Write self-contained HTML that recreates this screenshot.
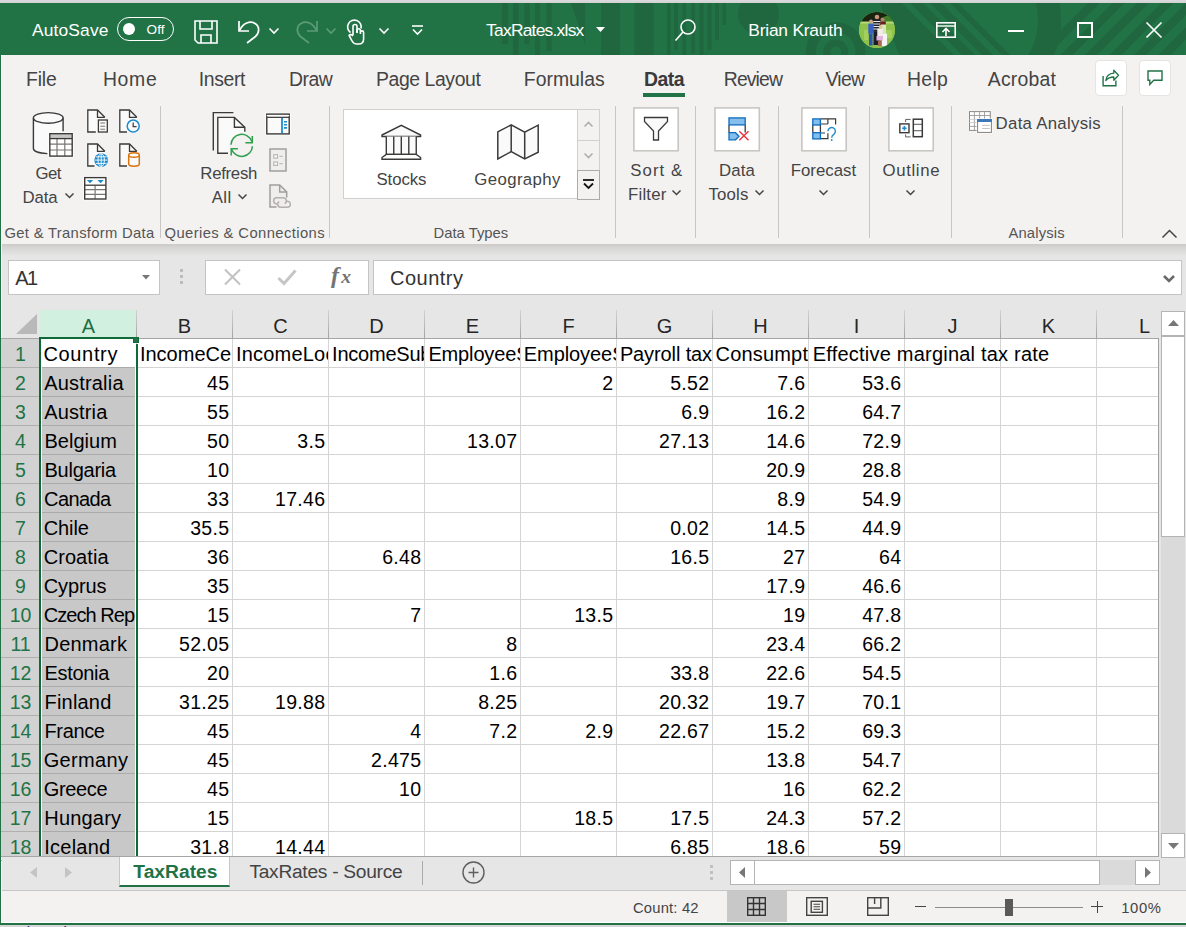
<!DOCTYPE html><html><head><meta charset="utf-8"><title>TaxRates.xlsx - Excel</title><style>
*{margin:0;padding:0;box-sizing:border-box}
html,body{width:1186px;height:927px;overflow:hidden;background:#f3f2f1}
body{font-family:"Liberation Sans",sans-serif;position:relative}
#app{position:absolute;left:0;top:0;width:1186px;height:927px;overflow:hidden;background:#f3f2f1}
.abs{position:absolute}
.t{position:absolute;white-space:nowrap}
svg{position:absolute;overflow:visible}
.sep{position:absolute;width:1px;background:#c8c6c4;top:106px;height:132px}
.cell{position:absolute;height:28px;line-height:30px;white-space:nowrap;overflow:hidden;color:#000}
.num{text-align:right;padding-right:2.700px;font-size:19.500px;letter-spacing:0.280px}
.txt{padding-left:2.500px;font-size:20px;letter-spacing:0.280px}
.rh{position:absolute;left:2px;width:37px;height:28px;text-align:center;font-size:19.500px;line-height:30px;color:#1e6e42}
.ch{position:absolute;top:310px;height:28px;width:95px;text-align:center;font-size:20px;line-height:32px;color:#262626}
</style></head><body><div id="app">
<div class="abs" style="left:0;top:0;width:1186px;height:3px;background:linear-gradient(#dcdcde,#d2d2d4)"></div>
<div class="abs" id="titlebar" style="left:0;top:3px;width:1186px;height:52px;background:#217346;overflow:hidden">
<svg width="1186" height="52" viewBox="0 3 1186 52" style="left:0;top:0"><g fill="#20673f"><rect x="502" y="3" width="6" height="41"/><rect x="513" y="3" width="5.500" height="52"/><rect x="524.500" y="3" width="5" height="41"/><rect x="535" y="3" width="5" height="52"/><rect x="546.500" y="3" width="5" height="48"/><path d="M571 3h14v42z"/><rect x="601" y="3" width="19" height="52"/><rect x="634.500" y="3" width="19" height="52"/><rect x="667" y="3" width="3.500" height="52"/><rect x="674" y="3" width="4" height="47"/><rect x="682.500" y="3" width="3.500" height="52"/><rect x="691.500" y="3" width="3.500" height="50"/><rect x="699.500" y="3" width="4" height="52"/><rect x="707.500" y="3" width="4" height="47"/><rect x="715" y="3" width="4" height="37"/><rect x="722.500" y="3" width="3.500" height="22"/><circle cx="758.500" cy="14" r="20.500"/></g><g fill="none" stroke="#20673f"><circle cx="835.700" cy="52" r="24.800" stroke-width="10"/><circle cx="835.700" cy="52" r="9" stroke-width="7"/><path d="M1042.050 -13.600A79.500 79.500 0 0 1 1035.100 65.600" stroke-width="23"/><path d="M880 3h22l52 52h-55zM910 3h13l52 52h-13zM930 3h11l52 52h-11zM950 3h8l52 52h-8z" fill="#20673f" stroke="none"/><path d="M1099 -2l-62 62M1123.500 -2l-62 62M1148 -2l-62 62M1172.500 -2l-62 62M1197 -2l-62 62M1221.500 -2l-62 62" stroke-width="8.500"/></g></svg>
</div>
<div class="t" style="left:32.10px;top:20px;font-size:17.4px;line-height:20px;color:#fff;letter-spacing:0.123px;">AutoSave</div>
<div class="abs" style="left:117px;top:17px;width:57px;height:24px;border:1px solid #fff;border-radius:12px"></div>
<div class="abs" style="left:123px;top:23px;width:12px;height:12px;border-radius:50%;background:#fff"></div>
<div class="t" style="left:146.50px;top:22px;font-size:13.6px;line-height:16px;color:#fff;letter-spacing:0.098px;">Off</div>
<svg style="left:194px;top:20px" width="24" height="24" viewBox="0 0 24 24" fill="none" stroke="#fff" stroke-width="1.6"><path d="M1 1h22v22H4l-3-3z"/><path d="M6 1v8h12V1"/><path d="M7 23v-8h10v8"/></svg>
<svg style="left:237px;top:19px" width="24" height="25" viewBox="0 0 24 25" fill="none" stroke="#fff" stroke-width="1.7"><path d="M2 2v10h10"/><path d="M2.5 11.5C6 4 13 1.5 18 4.5c5 3 4.500 9.500 0.500 13L10 24"/></svg>
<svg style="left:268.5px;top:27.5px" width="10" height="6" viewBox="0 0 10 6" fill="none" stroke="#fff" stroke-width="1.6"><path d="M0.500 0.500l4.500 4.500 4.500-4.500"/></svg>
<svg style="left:295px;top:19px" width="24" height="25" viewBox="0 0 24 25" fill="none" stroke="#5c9c78" stroke-width="1.7"><path d="M22 2v10H12"/><path d="M21.500 11.500C18 4 11 1.500 6 4.500c-5 3-4.500 9.500-0.500 13L14 24"/></svg>
<svg style="left:325.500px;top:27.500px" width="10" height="6" viewBox="0 0 10 6" fill="none" stroke="#5c9c78" stroke-width="1.6"><path d="M0.500 0.500l4.500 4.500 4.500-4.500"/></svg>
<svg style="left:346px;top:19px" width="20" height="26" viewBox="0 0 20 26" fill="none" stroke="#fff" stroke-width="1.6"><path d="M4.500 13.500A6.800 6.800 0 1 1 15 9.500"/><path d="M7 16V7.500a2 2 0 0 1 4 0V14"/><path d="M11 14v-2.500a1.700 1.700 0 0 1 3.400 0V15M14.400 15v-1.500a1.600 1.600 0 0 1 3.200 0V20c0 3-2 5-5 5h-2c-2 0-3.500-1-4.500-3l-3-5.500c1-1.500 2.800-1 3.900 0.500"/></svg>
<svg style="left:379px;top:27.500px" width="10" height="6" viewBox="0 0 10 6" fill="none" stroke="#fff" stroke-width="1.6"><path d="M0.500 0.500l4.500 4.500 4.500-4.500"/></svg>
<svg style="left:412px;top:25px" width="11" height="10" viewBox="0 0 11 10" fill="none" stroke="#fff" stroke-width="1.6"><path d="M0 1h11"/><path d="M1 4.500l4.500 4.500 4.500-4.500"/></svg>
<div class="t" style="left:486.10px;top:20px;font-size:17.4px;line-height:20px;color:#fff;letter-spacing:-0.756px;">TaxRates.xlsx</div>
<svg style="left:595.500px;top:27px" width="9" height="5" viewBox="0 0 9 5"><path d="M0 0h9l-4.500 5z" fill="#fff"/></svg>
<svg style="left:675px;top:18.500px" width="21" height="22" viewBox="0 0 21 22" fill="none" stroke="#fff" stroke-width="1.6"><circle cx="13" cy="8" r="7"/><path d="M8 13L0.500 21.500"/></svg>
<div class="t" style="left:748.30px;top:20px;font-size:17.4px;line-height:20px;color:#fff;letter-spacing:-0.218px;">Brian Krauth</div>
<div class="abs" style="left:859px;top:12px;width:36px;height:36px;border-radius:50%;overflow:hidden;background:#8cc04a"><svg width="36" height="36" viewBox="859 12 36 36" style="left:0;top:0"><rect x="859" y="12" width="36" height="36" fill="#8fc24c"/><rect x="859" y="12" width="36" height="10" fill="#18240f"/><path d="M880 22c2-5 6-7 9-6s5 4 6 6z" fill="#3f7f2a"/><rect x="859" y="21.500" width="36" height="2" fill="#b6d97a"/><path d="M864 30h4v10h-4zM884 30h8v8h-8z" fill="#a3d05c"/><circle cx="877" cy="17" r="2.300" fill="#c9967a"/><rect x="873.300" y="19.500" width="7.300" height="12.200" fill="#20222c"/><path d="M873.300 21.500h7.300M873.300 24h7.300M873.300 26.500h7.300M873.300 29h7.300" stroke="#e9e9ef" stroke-width="1.100"/><rect x="873.500" y="31.500" width="6" height="13.500" fill="#1b1d2b"/><circle cx="871" cy="21.500" r="1.900" fill="#d1a283"/><rect x="868.300" y="23.600" width="5" height="10" fill="#3a5fc4"/><rect x="869" y="33.500" width="3.600" height="12" fill="#2f56a8"/><circle cx="882.500" cy="19.500" r="2" fill="#b9826a"/><rect x="880.300" y="21.500" width="5.500" height="3.500" fill="#6b1f1f"/><rect x="881" y="24.500" width="5" height="9" fill="#d9e6b8"/><rect x="882" y="33.500" width="5" height="12.500" fill="#f4f4f6"/><circle cx="880.500" cy="27" r="1.900" fill="#e2c08f"/><rect x="877.300" y="28.800" width="5.500" height="8" fill="#f1ecea"/><rect x="876.500" y="36" width="6.500" height="4.500" fill="#e3b4dc"/><rect x="878" y="40.500" width="3.500" height="5.500" fill="#a86a55"/></svg></div>
<svg style="left:936px;top:22px" width="20" height="16" viewBox="0 0 20 16" fill="none" stroke="#fff" stroke-width="1.6"><rect x="0.800" y="0.800" width="18.400" height="14.400"/><path d="M0.800 4h18.400" stroke-width="1.400"/><path d="M10 14V7M6.500 10l3.500-3.500 3.500 3.500"/></svg>
<div class="abs" style="left:1008px;top:30px;width:16px;height:2px;background:#fff"></div>
<div class="abs" style="left:1077px;top:22px;width:16px;height:16px;border:2px solid #fff"></div>
<svg style="left:1146px;top:22px" width="16" height="16" viewBox="0 0 16 16" stroke="#fff" stroke-width="1.700" fill="none"><path d="M0.500 0.500l15 15M15.500 0.500l-15 15"/></svg>
<div class="abs" style="left:0;top:55px;width:1px;height:869px;background:#217346"></div>
<div class="abs" style="left:1px;top:55px;width:1px;height:868px;background:#fbfbfb"></div>
<div class="t" style="left:26.00px;top:68px;font-size:19.4px;line-height:22px;color:#444;letter-spacing:-0.154px;">File</div>
<div class="t" style="left:102.90px;top:68px;font-size:19.4px;line-height:22px;color:#444;letter-spacing:0.720px;">Home</div>
<div class="t" style="left:198.70px;top:68px;font-size:19.4px;line-height:22px;color:#444;letter-spacing:-0.342px;">Insert</div>
<div class="t" style="left:289.10px;top:68px;font-size:19.4px;line-height:22px;color:#444;letter-spacing:-0.515px;">Draw</div>
<div class="t" style="left:376.00px;top:68px;font-size:19.4px;line-height:22px;color:#444;letter-spacing:-0.411px;">Page Layout</div>
<div class="t" style="left:523.80px;top:68px;font-size:19.4px;line-height:22px;color:#444;">Formulas</div>
<div class="t" style="left:723.80px;top:68px;font-size:19.4px;line-height:22px;color:#444;letter-spacing:-0.895px;">Review</div>
<div class="t" style="left:825.40px;top:68px;font-size:19.4px;line-height:22px;color:#444;letter-spacing:-0.658px;">View</div>
<div class="t" style="left:907.00px;top:68px;font-size:19.4px;line-height:22px;color:#444;letter-spacing:0.335px;">Help</div>
<div class="t" style="left:987.80px;top:68px;font-size:19.4px;line-height:22px;color:#444;letter-spacing:0.210px;">Acrobat</div>
<div class="t" style="left:643.90px;top:68px;font-size:19.4px;line-height:22px;color:#3a3a3a;font-weight:bold;letter-spacing:-0.448px;">Data</div>
<div class="abs" style="left:643px;top:93px;width:42px;height:4px;background:#217346"></div>
<svg style="left:1086px;top:56px" width="100" height="50" viewBox="1086 56 100 50" fill="none"><rect x="1095.500" y="60.500" width="31" height="35" rx="3.500" fill="#fff" stroke="#e6e4e2" stroke-width="1"/><rect x="1139.500" y="60.500" width="31" height="35" rx="3.500" fill="#fff" stroke="#e6e4e2" stroke-width="1"/><path d="M1103.100 76v9.800h12.800v-5.300" stroke="#217346" stroke-width="1.400"/><path d="M1105.800 80.500c0.600-4.300 3.800-7 8-7.300v-3l4.700 5-4.700 5v-3.200c-3.400 0-5.800 1-8 3.500z" stroke="#217346" stroke-width="1.300" stroke-linejoin="round"/><path d="M1148 71h14v9.300h-8.300l-3.900 4.200v-4.200h-1.800z" stroke="#217346" stroke-width="1.400"/></svg>
<div class="abs" style="left:2px;top:244px;width:1184px;height:646px;background:#e6e6e6"></div>
<div class="abs" style="left:2px;top:244px;width:1184px;height:12px;background:linear-gradient(#cccac8,#d6d5d4 30%,#e6e6e6)"></div>
<div class="sep" style="left:160px"></div>
<div class="sep" style="left:329px"></div>
<div class="sep" style="left:615px"></div>
<div class="sep" style="left:695px"></div>
<div class="sep" style="left:778px"></div>
<div class="sep" style="left:869px"></div>
<div class="sep" style="left:951px"></div>
<div class="sep" style="left:1122px"></div>
<div class="abs" style="left:343px;top:109px;width:235px;height:90px;background:#fff;border:1px solid #d2d0ce"></div>
<div class="abs" style="left:577px;top:109px;width:23px;height:32px;border:1px solid #d2d0ce;background:#f3f2f1"></div>
<div class="abs" style="left:577px;top:140px;width:23px;height:31px;border:1px solid #d2d0ce;background:#f3f2f1"></div>
<div class="abs" style="left:577px;top:170px;width:23px;height:30px;border:1px solid #ababab;background:#f3f2f1"></div>
<svg style="left:584px;top:122px" width="9" height="5" viewBox="0 0 9 5" fill="none" stroke="#b0aeac" stroke-width="1.600"><path d="M0.500 4.500l4-4 4 4"/></svg>
<svg style="left:584px;top:153px" width="9" height="5" viewBox="0 0 9 5" fill="none" stroke="#b0aeac" stroke-width="1.600"><path d="M0.500 0.500l4 4 4-4"/></svg>
<svg style="left:583px;top:179px" width="11" height="10" viewBox="0 0 11 10" fill="none" stroke="#151515" stroke-width="1.800"><path d="M0 1h11"/><path d="M1 4.500l4.500 4.500 4.500-4.500"/></svg>
<div class="t" style="left:35.60px;top:164px;font-size:16.8px;line-height:19px;color:#444;letter-spacing:-0.593px;">Get</div>
<div class="t" style="left:22.50px;top:188px;font-size:16.8px;line-height:19px;color:#444;letter-spacing:-0.105px;">Data</div>
<div class="t" style="left:200.30px;top:164px;font-size:16.8px;line-height:19px;color:#444;letter-spacing:-0.288px;">Refresh</div>
<div class="t" style="left:211.80px;top:188px;font-size:16.8px;line-height:19px;color:#444;letter-spacing:0.339px;">All</div>
<div class="t" style="left:376.50px;top:170px;font-size:16.8px;line-height:19px;color:#444;letter-spacing:-0.094px;">Stocks</div>
<div class="t" style="left:474.30px;top:170px;font-size:16.8px;line-height:19px;color:#444;letter-spacing:0.383px;">Geography</div>
<div class="t" style="left:630.30px;top:161px;font-size:16.8px;line-height:19px;color:#444;letter-spacing:1.052px;">Sort &amp;</div>
<div class="t" style="left:628.00px;top:185px;font-size:16.8px;line-height:19px;color:#444;letter-spacing:0.200px;">Filter</div>
<div class="t" style="left:719.00px;top:161px;font-size:16.8px;line-height:19px;color:#444;letter-spacing:0.129px;">Data</div>
<div class="t" style="left:708.50px;top:185px;font-size:16.8px;line-height:19px;color:#444;letter-spacing:0.179px;">Tools</div>
<div class="t" style="left:790.70px;top:161px;font-size:16.8px;line-height:19px;color:#444;letter-spacing:0.026px;">Forecast</div>
<div class="t" style="left:882.50px;top:161px;font-size:16.8px;line-height:19px;color:#444;letter-spacing:0.644px;">Outline</div>
<div class="t" style="left:995.60px;top:114px;font-size:16.8px;line-height:19px;color:#444;letter-spacing:0.291px;">Data Analysis</div>
<div class="t" style="left:4.50px;top:225px;font-size:14.8px;line-height:17px;color:#555;letter-spacing:0.308px;">Get &amp; Transform Data</div>
<div class="t" style="left:164.50px;top:225px;font-size:14.8px;line-height:17px;color:#555;letter-spacing:0.397px;">Queries &amp; Connections</div>
<div class="t" style="left:433.60px;top:225px;font-size:14.8px;line-height:17px;color:#555;letter-spacing:-0.005px;">Data Types</div>
<div class="t" style="left:1008.40px;top:225px;font-size:14.8px;line-height:17px;color:#555;letter-spacing:0.157px;">Analysis</div>
<svg style="left:65px;top:193px" width="9" height="5" viewBox="0 0 9 5" fill="none" stroke="#444" stroke-width="1.5"><path d="M0.500 0.500l4.0 4 4.0-4"/></svg>
<svg style="left:237.5px;top:194px" width="9" height="5" viewBox="0 0 9 5" fill="none" stroke="#444" stroke-width="1.5"><path d="M0.500 0.500l4.0 4 4.0-4"/></svg>
<svg style="left:672px;top:190px" width="9" height="5" viewBox="0 0 9 5" fill="none" stroke="#444" stroke-width="1.5"><path d="M0.500 0.500l4.0 4 4.0-4"/></svg>
<svg style="left:755px;top:190px" width="9" height="5" viewBox="0 0 9 5" fill="none" stroke="#444" stroke-width="1.5"><path d="M0.500 0.500l4.0 4 4.0-4"/></svg>
<svg style="left:818.5px;top:190px" width="9" height="5" viewBox="0 0 9 5" fill="none" stroke="#444" stroke-width="1.5"><path d="M0.500 0.500l4.0 4 4.0-4"/></svg>
<svg style="left:905.5px;top:190px" width="9" height="5" viewBox="0 0 9 5" fill="none" stroke="#444" stroke-width="1.5"><path d="M0.500 0.500l4.0 4 4.0-4"/></svg>
<svg style="left:1162px;top:230px" width="15" height="8" viewBox="0 0 15 8" fill="none" stroke="#444" stroke-width="1.500"><path d="M0.500 7.500l7-7 7 7"/></svg>
<svg style="left:0;top:100px" width="1186" height="150" viewBox="0 100 1186 150" fill="none" stroke-linejoin="miter"><path d="M33.400 117.900v30.500c0 2.800 6 5 14 5.300h16V117.900" fill="#fafafa" stroke="none"/><ellipse cx="48.250" cy="117.900" rx="14.850" ry="5.300" fill="#fafafa" stroke="#3b3a39" stroke-width="1.400"/><path d="M33.400 117.900v30.600c0 2.700 5.500 4.800 14 5.100M63.100 117.900v13.300" stroke="#3b3a39" stroke-width="1.400"/><rect x="48.400" y="132.300" width="25.200" height="25.200" fill="#fff" stroke="none"/><rect x="50.400" y="134.200" width="21.400" height="4" fill="#c8c6c4" stroke="none"/><path d="M57 139v17M64.800 139v17M50 144.200h22M50 150h22" stroke="#797775" stroke-width="1.200"/><path d="M49.800 138.600h22.400" stroke="#3b3a39" stroke-width="1.300"/><rect x="49.800" y="133.700" width="22.400" height="22.400" stroke="#3b3a39" stroke-width="1.400"/><path d="M87.8 110H97.5L104.8 117.3V132H87.8z" fill="#fafafa" stroke="none"/><path d="M95.8 132H87.8V110H97.5L104.8 117.3" stroke="#3b3a39" stroke-width="1.3"/><path d="M97.5 110V117.3H104.8" stroke="#3b3a39" stroke-width="1.3"/><rect x="98.400" y="120" width="8.900" height="12" fill="#fafafa" stroke="#3b3a39" stroke-width="1.300"/><path d="M100.300 123h4.800M100.300 126.200h4.800M100.300 129.300h4.800" stroke="#797775" stroke-width="1.100"/><path d="M119.8 110H129.5L136.8 117.3V132H119.8z" fill="#fafafa" stroke="none"/><path d="M127 132H119.8V110H129.5L136.8 117.3" stroke="#3b3a39" stroke-width="1.3"/><path d="M129.5 110V117.3H136.8" stroke="#3b3a39" stroke-width="1.3"/><circle cx="133.200" cy="126.100" r="6" fill="#fafafa" stroke="#1e8bcd" stroke-width="1.500"/><path d="M133.200 122.400v4.200h3.400" stroke="#3b3a39" stroke-width="1.200"/><path d="M87.8 144H97.5L104.8 151.3V166H87.8z" fill="#fafafa" stroke="none"/><path d="M94.5 166H87.8V144H97.5L104.8 151.3" stroke="#3b3a39" stroke-width="1.3"/><path d="M97.5 144V151.3H104.8" stroke="#3b3a39" stroke-width="1.3"/><circle cx="101.200" cy="160.100" r="6.900" fill="#1e8bcd" stroke="none"/><path d="M94.800 160.100h12.800M101.200 153.600v13M95.800 156.800h10.800M95.800 163.400h10.800" stroke="#fff" stroke-width="0.900"/><ellipse cx="101.200" cy="160.100" rx="3.200" ry="6.400" stroke="#fff" stroke-width="0.900"/><path d="M119.8 144H129.5L136.8 151.3V166H119.8z" fill="#fafafa" stroke="none"/><path d="M127 166H119.8V144H129.5L136.8 151.3" stroke="#3b3a39" stroke-width="1.3"/><path d="M129.5 144V151.3H136.8" stroke="#3b3a39" stroke-width="1.3"/><path d="M128.700 155v9c0 1.300 2.300 2.200 5.300 2.200s5.300-0.900 5.300-2.200v-9" fill="#fafafa" stroke="#d9730d" stroke-width="1.500"/><ellipse cx="134" cy="155" rx="5.300" ry="2.300" fill="#fafafa" stroke="#d9730d" stroke-width="1.500"/><rect x="83.300" y="176.200" width="24" height="24.200" fill="#fff" stroke="none"/><path d="M95.100 185.500v13.500M85 189.700h21M85 194.300h21" stroke="#797775" stroke-width="1.200"/><path d="M84.700 185.200h21.200" stroke="#3b3a39" stroke-width="1.300"/><rect x="84.700" y="177.600" width="21.200" height="21.400" stroke="#3b3a39" stroke-width="1.400"/><path d="M86.800 180h6.400l-3.200 3.200zM97.400 180h6.400l-3.200 3.200z" fill="#1e8bcd" stroke="none"/><path d="M213.300 150.600V112.600H233.400" stroke="#3b3a39" stroke-width="1.400"/><path d="M217.800 117.400H234.400L244.800 127.300V153.300H217.800z" fill="#fafafa" stroke="none"/><path d="M228 153.300H217.800V117.400H234.400L244.800 127.300V131.800" stroke="#3b3a39" stroke-width="1.400"/><path d="M234.400 117.400V127.300H244.800" stroke="#3b3a39" stroke-width="1.400"/><circle cx="241.700" cy="145.400" r="12.500" fill="#f3f2f1" stroke="none"/><path d="M231 144.800A10.700 10.700 0 0 1 251.800 141.500" stroke="#2f9e4d" stroke-width="1.500"/><path d="M252.300 136v6.700h-6.900" stroke="#2f9e4d" stroke-width="1.500"/><path d="M252.400 146.200A10.700 10.700 0 0 1 231.700 149.500" stroke="#2f9e4d" stroke-width="1.500"/><path d="M231.200 155.500v-6.700h6.700" stroke="#2f9e4d" stroke-width="1.500"/><rect x="265.400" y="112.700" width="25.200" height="22.600" fill="#fff" stroke="none"/><rect x="266.800" y="114.100" width="22.400" height="19.800" fill="#fafafa" stroke="#3b3a39" stroke-width="1.400"/><path d="M266.800 117.300h22.400" stroke="#3b3a39" stroke-width="1.300"/><path d="M266.800 115.600h22.400" stroke="#fff" stroke-width="1.200"/><path d="M282 118v15.200" stroke="#1e8bcd" stroke-width="1.800"/><path d="M284 121.800h3M284 124.800h3M284 127.900h3" stroke="#1e8bcd" stroke-width="1.600"/><rect x="270" y="149" width="16" height="22" fill="#efeeed" stroke="#a19f9d" stroke-width="1.500"/><rect x="273.800" y="154.700" width="3.700" height="3.400" fill="#fafafa" stroke="#b5b3b1" stroke-width="1.100"/><rect x="273.800" y="162" width="3.700" height="3.400" fill="#fafafa" stroke="#b5b3b1" stroke-width="1.100"/><path d="M279.400 156.200h3.400M279.400 163.800h3.400" stroke="#b5b3b1" stroke-width="1.100"/><path d="M270 184.9H279.7L286.7 191.9V207.0H270z" fill="#efeeed" stroke="none"/><path d="M276.6 207.0H270V184.9H279.7L286.7 191.9V197.4" stroke="#a19f9d" stroke-width="1.5"/><path d="M279.7 184.9V191.9H286.7" stroke="#a19f9d" stroke-width="1.5"/><rect x="271" y="197" width="20" height="11.500" fill="#f3f2f1" stroke="none" opacity="0"/><path d="M277.500 203.900h-0.800a3.050 3.050 0 0 1 0-6.100h6.600a3.050 3.050 0 0 1 1.500 5.700" stroke="#b3b0ad" stroke-width="1.500"/><path d="M286.500 201.200h0.800a3.050 3.050 0 0 1 0 6.100h-6.600a3.050 3.050 0 0 1-1.500-5.700" stroke="#b3b0ad" stroke-width="1.500"/><path d="M382 135L401.300 125.400L420.600 135V136.500H382z" fill="#fafafa" stroke="#3b3a39" stroke-width="1.400"/><rect x="386.300" y="136.500" width="30" height="17.900" fill="#fafafa" stroke="none"/><path d="M386.300 136.500v17.900M393.750 136.500v17.900M401.300 136.500v17.900M408.800 136.500v17.900M416.250 136.500v17.900M386.300 154.400h30" stroke="#3b3a39" stroke-width="1.400"/><path d="M386.300 154.400L382 157.500V159.200H420.600V157.500L416.250 154.400z" fill="#fff" stroke="#3b3a39" stroke-width="1.400"/><path d="M497.800 131.900L511.200 124.900L524.700 132.200L538.200 125.200V152.200L524.700 158.900L511.200 151.600L497.800 158.900z" fill="#fafafa" stroke="#3b3a39" stroke-width="1.500"/><path d="M511.200 124.900V151.600M524.700 132.200V158.900" stroke="#3b3a39" stroke-width="1.500"/><rect x="633.9" y="107.900" width="44.300" height="42.900" fill="#fff" stroke="#c8c6c4" stroke-width="1.600"/><rect x="715.0" y="107.900" width="44.300" height="42.900" fill="#fff" stroke="#c8c6c4" stroke-width="1.600"/><rect x="801.9" y="107.900" width="44.300" height="42.900" fill="#fff" stroke="#c8c6c4" stroke-width="1.600"/><rect x="888.9" y="107.900" width="44.300" height="42.900" fill="#fff" stroke="#c8c6c4" stroke-width="1.600"/><path d="M644.500 117.500H667.500V121.500L658.500 131V140H653.500V131L644.500 121.500z" fill="#fafafa" stroke="#3b3a39" stroke-width="1.300"/><path d="M729 125v7.500M745.200 125v7.500" stroke="#3b3a39" stroke-width="1.300"/><rect x="729" y="117.900" width="16.200" height="7" fill="#83beec" stroke="#0f6cbd" stroke-width="1.300"/><path d="M729 132.700H735.500L739 136.300L735.500 139.800H729z" fill="#83beec" stroke="#0f6cbd" stroke-width="1.300"/><path d="M739.300 131.200l9.200 9M748.500 131.200l-9.200 9" stroke="#e8333a" stroke-width="1.400"/><path d="M821 118.900h14.600v5.500M827.900 118.900v5M821 124h6.900M821 138.700h6.900v-5.500M821 133h4" stroke="#3b3a39" stroke-width="1.200"/><path d="M812.800 125v7.500M820.400 125v7.500" stroke="#3b3a39" stroke-width="1.300"/><rect x="812.800" y="118.900" width="7.600" height="6.100" fill="#83beec" stroke="#0f6cbd" stroke-width="1.300"/><rect x="812.800" y="132.700" width="7.600" height="6.200" fill="#83beec" stroke="#0f6cbd" stroke-width="1.300"/><path d="M828 131.300a3.700 3.700 0 1 1 5.800 3c-1.600 1.100-2.100 1.800-2.100 3.400" stroke="#1e8bcd" stroke-width="1.400"/><circle cx="831.700" cy="140" r="0.950" fill="#1e8bcd" stroke="none"/><path d="M905.600 122v-2.600h5M905.600 134.500v2.400h5" stroke="#605e5c" stroke-width="1"/><rect x="899.800" y="123.900" width="9.200" height="8.800" fill="#fafafa" stroke="#3b3a39" stroke-width="1.400"/><path d="M902.200 128.300h4.400M904.400 126.100v4.400" stroke="#1e8bcd" stroke-width="1.600"/><path d="M913.300 124.400h9M913.300 130.700h9" stroke="#797775" stroke-width="1.200"/><rect x="913.300" y="119.200" width="9" height="17.500" stroke="#3b3a39" stroke-width="1.500"/><rect x="969.500" y="111.600" width="20.800" height="18.800" fill="#fff" stroke="#8a8a8a" stroke-width="1"/><path d="M974.400 111.600v18.800M979.600 111.600v18.800M984.500 111.600v18.800M969.500 115.500h20.800M969.500 126.400h20.800" stroke="#9a9a9a" stroke-width="0.900"/><path d="M969.500 119.300h20.800M969.500 122.600h20.800" stroke="#c8c8c8" stroke-width="0.900"/><rect x="976.600" y="118.500" width="15.800" height="14.900" fill="#fff" stroke="none"/><rect x="977.600" y="119.500" width="13.800" height="12.900" fill="#fff" stroke="#808080" stroke-width="1"/><rect x="977.100" y="119" width="14.800" height="3" fill="#3c78b8" stroke="none"/><path d="M982.100 125.400h7.700M982.100 128.500h7.700" stroke="#bdbdbd" stroke-width="0.900"/></svg>
<div class="abs" style="left:8px;top:260px;width:152px;height:35px;background:#fff;border:1px solid #c4c4c4"></div>
<div class="t" style="left:15.20px;top:267px;font-size:20px;line-height:22px;color:#333;letter-spacing:-1.540px;">A1</div>
<svg style="left:141.500px;top:274.500px" width="8" height="4.500" viewBox="0 0 8 4.500"><path d="M0 0h8l-4 4.500z" fill="#777"/></svg>
<div class="abs" style="left:180px;top:269px;width:3px;height:3px;background:#bdbdbd"></div>
<div class="abs" style="left:180px;top:275px;width:3px;height:3px;background:#bdbdbd"></div>
<div class="abs" style="left:180px;top:281px;width:3px;height:3px;background:#bdbdbd"></div>
<div class="abs" style="left:205px;top:260px;width:164px;height:35px;background:#fff;border:1px solid #c4c4c4"></div>
<svg style="left:224px;top:269px" width="17" height="16" viewBox="0 0 17 16" fill="none" stroke="#c2c2c2" stroke-width="2.100"><path d="M1 0.500l15 15M16 0.500l-15 15"/></svg>
<svg style="left:277px;top:269px" width="20" height="17" viewBox="0 0 20 17" fill="none" stroke="#c6c6c6" stroke-width="3"><path d="M1.500 9l5.500 5.500L18.500 1.500"/></svg>
<div class="t" style="left:331.00px;top:262px;font-size:24px;line-height:26px;color:#747474;font-weight:bold;font-style:italic;font-family:'Liberation Serif',serif;">f</div>
<div class="t" style="left:341.30px;top:266px;font-size:19.5px;line-height:22px;color:#747474;font-weight:bold;font-style:italic;font-family:'Liberation Serif',serif;">x</div>
<div class="abs" style="left:373px;top:260px;width:809px;height:35px;background:#fff;border:1px solid #c4c4c4"></div>
<div class="t" style="left:390.00px;top:267px;font-size:20px;line-height:22px;color:#333;letter-spacing:0.495px;">Country</div>
<svg style="left:1162.500px;top:275px" width="12" height="8" viewBox="0 0 12 8" fill="none" stroke="#6a6a6a" stroke-width="2.600"><path d="M1 1l5 5 5-5"/></svg>
<div class="abs" id="grid" style="left:40px;top:339px;width:1119px;height:518px;background:#fff;overflow:hidden"></div>
<div class="abs" style="left:40px;top:310px;width:97px;height:28px;background:#d2f0e0"></div>
<div class="ch" style="left:41px;color:#1e6e42">A</div>
<div class="abs" style="left:136px;top:310px;width:1px;height:28px;background:linear-gradient(#d4d4d4,#a2a2a2)"></div>
<div class="ch" style="left:137px;color:#262626">B</div>
<div class="abs" style="left:232px;top:310px;width:1px;height:28px;background:linear-gradient(#d4d4d4,#a2a2a2)"></div>
<div class="ch" style="left:233px;color:#262626">C</div>
<div class="abs" style="left:328px;top:310px;width:1px;height:28px;background:linear-gradient(#d4d4d4,#a2a2a2)"></div>
<div class="ch" style="left:329px;color:#262626">D</div>
<div class="abs" style="left:424px;top:310px;width:1px;height:28px;background:linear-gradient(#d4d4d4,#a2a2a2)"></div>
<div class="ch" style="left:425px;color:#262626">E</div>
<div class="abs" style="left:520px;top:310px;width:1px;height:28px;background:linear-gradient(#d4d4d4,#a2a2a2)"></div>
<div class="ch" style="left:521px;color:#262626">F</div>
<div class="abs" style="left:616px;top:310px;width:1px;height:28px;background:linear-gradient(#d4d4d4,#a2a2a2)"></div>
<div class="ch" style="left:617px;color:#262626">G</div>
<div class="abs" style="left:712px;top:310px;width:1px;height:28px;background:linear-gradient(#d4d4d4,#a2a2a2)"></div>
<div class="ch" style="left:713px;color:#262626">H</div>
<div class="abs" style="left:808px;top:310px;width:1px;height:28px;background:linear-gradient(#d4d4d4,#a2a2a2)"></div>
<div class="ch" style="left:809px;color:#262626">I</div>
<div class="abs" style="left:904px;top:310px;width:1px;height:28px;background:linear-gradient(#d4d4d4,#a2a2a2)"></div>
<div class="ch" style="left:905px;color:#262626">J</div>
<div class="abs" style="left:1000px;top:310px;width:1px;height:28px;background:linear-gradient(#d4d4d4,#a2a2a2)"></div>
<div class="ch" style="left:1001px;color:#262626">K</div>
<div class="abs" style="left:1096px;top:310px;width:1px;height:28px;background:linear-gradient(#d4d4d4,#a2a2a2)"></div>
<div class="ch" style="left:1097px;color:#262626">L</div>
<div class="abs" style="left:1192px;top:310px;width:1px;height:28px;background:linear-gradient(#d4d4d4,#a2a2a2)"></div>
<svg style="left:16px;top:314px" width="22" height="20" viewBox="0 0 22 20"><path d="M21 0v20H0z" fill="#b9b9b9"/></svg>
<div class="abs" style="left:1px;top:338px;width:1158px;height:1px;background:#a6a6a6"></div>
<div class="abs" style="left:1px;top:339px;width:38px;height:518px;background:#d2d2d2"></div>
<div class="rh" style="top:339px;color:#217346">1</div>
<div class="abs" style="left:1px;top:367px;width:38px;height:1px;background:#b0b0b0"></div>
<div class="rh" style="top:368px;color:#217346">2</div>
<div class="abs" style="left:1px;top:396px;width:38px;height:1px;background:#b0b0b0"></div>
<div class="rh" style="top:397px;color:#217346">3</div>
<div class="abs" style="left:1px;top:425px;width:38px;height:1px;background:#b0b0b0"></div>
<div class="rh" style="top:426px;color:#217346">4</div>
<div class="abs" style="left:1px;top:454px;width:38px;height:1px;background:#b0b0b0"></div>
<div class="rh" style="top:455px;color:#217346">5</div>
<div class="abs" style="left:1px;top:483px;width:38px;height:1px;background:#b0b0b0"></div>
<div class="rh" style="top:484px;color:#217346">6</div>
<div class="abs" style="left:1px;top:512px;width:38px;height:1px;background:#b0b0b0"></div>
<div class="rh" style="top:513px;color:#217346">7</div>
<div class="abs" style="left:1px;top:541px;width:38px;height:1px;background:#b0b0b0"></div>
<div class="rh" style="top:542px;color:#217346">8</div>
<div class="abs" style="left:1px;top:570px;width:38px;height:1px;background:#b0b0b0"></div>
<div class="rh" style="top:571px;color:#217346">9</div>
<div class="abs" style="left:1px;top:599px;width:38px;height:1px;background:#b0b0b0"></div>
<div class="rh" style="top:600px;color:#217346">10</div>
<div class="abs" style="left:1px;top:628px;width:38px;height:1px;background:#b0b0b0"></div>
<div class="rh" style="top:629px;color:#217346">11</div>
<div class="abs" style="left:1px;top:657px;width:38px;height:1px;background:#b0b0b0"></div>
<div class="rh" style="top:658px;color:#217346">12</div>
<div class="abs" style="left:1px;top:686px;width:38px;height:1px;background:#b0b0b0"></div>
<div class="rh" style="top:687px;color:#217346">13</div>
<div class="abs" style="left:1px;top:715px;width:38px;height:1px;background:#b0b0b0"></div>
<div class="rh" style="top:716px;color:#217346">14</div>
<div class="abs" style="left:1px;top:744px;width:38px;height:1px;background:#b0b0b0"></div>
<div class="rh" style="top:745px;color:#217346">15</div>
<div class="abs" style="left:1px;top:773px;width:38px;height:1px;background:#b0b0b0"></div>
<div class="rh" style="top:774px;color:#217346">16</div>
<div class="abs" style="left:1px;top:802px;width:38px;height:1px;background:#b0b0b0"></div>
<div class="rh" style="top:803px;color:#217346">17</div>
<div class="abs" style="left:1px;top:831px;width:38px;height:1px;background:#b0b0b0"></div>
<div class="rh" style="top:832px;color:#217346">18</div>
<div class="abs" style="left:1px;top:860px;width:38px;height:1px;background:#b0b0b0"></div>
<div class="abs" style="left:42px;top:368px;width:93px;height:489px;background:#c8c8c8"></div>
<div class="abs" style="left:137px;top:367px;width:1022px;height:1px;background:#d4d4d4"></div>
<div class="abs" style="left:42px;top:367px;width:93px;height:1px;background:#ababab"></div>
<div class="abs" style="left:137px;top:396px;width:1022px;height:1px;background:#d4d4d4"></div>
<div class="abs" style="left:42px;top:396px;width:93px;height:1px;background:#ababab"></div>
<div class="abs" style="left:137px;top:425px;width:1022px;height:1px;background:#d4d4d4"></div>
<div class="abs" style="left:42px;top:425px;width:93px;height:1px;background:#ababab"></div>
<div class="abs" style="left:137px;top:454px;width:1022px;height:1px;background:#d4d4d4"></div>
<div class="abs" style="left:42px;top:454px;width:93px;height:1px;background:#ababab"></div>
<div class="abs" style="left:137px;top:483px;width:1022px;height:1px;background:#d4d4d4"></div>
<div class="abs" style="left:42px;top:483px;width:93px;height:1px;background:#ababab"></div>
<div class="abs" style="left:137px;top:512px;width:1022px;height:1px;background:#d4d4d4"></div>
<div class="abs" style="left:42px;top:512px;width:93px;height:1px;background:#ababab"></div>
<div class="abs" style="left:137px;top:541px;width:1022px;height:1px;background:#d4d4d4"></div>
<div class="abs" style="left:42px;top:541px;width:93px;height:1px;background:#ababab"></div>
<div class="abs" style="left:137px;top:570px;width:1022px;height:1px;background:#d4d4d4"></div>
<div class="abs" style="left:42px;top:570px;width:93px;height:1px;background:#ababab"></div>
<div class="abs" style="left:137px;top:599px;width:1022px;height:1px;background:#d4d4d4"></div>
<div class="abs" style="left:42px;top:599px;width:93px;height:1px;background:#ababab"></div>
<div class="abs" style="left:137px;top:628px;width:1022px;height:1px;background:#d4d4d4"></div>
<div class="abs" style="left:42px;top:628px;width:93px;height:1px;background:#ababab"></div>
<div class="abs" style="left:137px;top:657px;width:1022px;height:1px;background:#d4d4d4"></div>
<div class="abs" style="left:42px;top:657px;width:93px;height:1px;background:#ababab"></div>
<div class="abs" style="left:137px;top:686px;width:1022px;height:1px;background:#d4d4d4"></div>
<div class="abs" style="left:42px;top:686px;width:93px;height:1px;background:#ababab"></div>
<div class="abs" style="left:137px;top:715px;width:1022px;height:1px;background:#d4d4d4"></div>
<div class="abs" style="left:42px;top:715px;width:93px;height:1px;background:#ababab"></div>
<div class="abs" style="left:137px;top:744px;width:1022px;height:1px;background:#d4d4d4"></div>
<div class="abs" style="left:42px;top:744px;width:93px;height:1px;background:#ababab"></div>
<div class="abs" style="left:137px;top:773px;width:1022px;height:1px;background:#d4d4d4"></div>
<div class="abs" style="left:42px;top:773px;width:93px;height:1px;background:#ababab"></div>
<div class="abs" style="left:137px;top:802px;width:1022px;height:1px;background:#d4d4d4"></div>
<div class="abs" style="left:42px;top:802px;width:93px;height:1px;background:#ababab"></div>
<div class="abs" style="left:137px;top:831px;width:1022px;height:1px;background:#d4d4d4"></div>
<div class="abs" style="left:42px;top:831px;width:93px;height:1px;background:#ababab"></div>
<div class="abs" style="left:137px;top:860px;width:1022px;height:1px;background:#d4d4d4"></div>
<div class="abs" style="left:42px;top:860px;width:93px;height:1px;background:#ababab"></div>
<div class="abs" style="left:136px;top:339px;width:1px;height:518px;background:#d4d4d4"></div>
<div class="abs" style="left:232px;top:339px;width:1px;height:518px;background:#d4d4d4"></div>
<div class="abs" style="left:328px;top:339px;width:1px;height:518px;background:#d4d4d4"></div>
<div class="abs" style="left:424px;top:339px;width:1px;height:518px;background:#d4d4d4"></div>
<div class="abs" style="left:520px;top:339px;width:1px;height:518px;background:#d4d4d4"></div>
<div class="abs" style="left:616px;top:339px;width:1px;height:518px;background:#d4d4d4"></div>
<div class="abs" style="left:712px;top:339px;width:1px;height:518px;background:#d4d4d4"></div>
<div class="abs" style="left:808px;top:339px;width:1px;height:518px;background:#d4d4d4"></div>
<div class="abs" style="left:904px;top:339px;width:1px;height:518px;background:#d4d4d4"></div>
<div class="abs" style="left:1000px;top:339px;width:1px;height:518px;background:#d4d4d4"></div>
<div class="abs" style="left:1096px;top:339px;width:1px;height:518px;background:#d4d4d4"></div>
<div class="abs" style="left:41px;top:343px;width:94px;height:22px;overflow:hidden"><div class="t" style="left:2.50px;top:0;font-size:20px;line-height:22px;color:#000;letter-spacing:0.645px;">Country</div></div>
<div class="abs" style="left:41px;top:372px;width:94px;height:22px;overflow:hidden"><div class="t" style="left:3.20px;top:0;font-size:20px;line-height:22px;color:#000;letter-spacing:0.189px;">Australia</div></div>
<div class="abs" style="left:41px;top:401px;width:94px;height:22px;overflow:hidden"><div class="t" style="left:3.20px;top:0;font-size:20px;line-height:22px;color:#000;letter-spacing:0.146px;">Austria</div></div>
<div class="abs" style="left:41px;top:430px;width:94px;height:22px;overflow:hidden"><div class="t" style="left:3.50px;top:0;font-size:20px;line-height:22px;color:#000;letter-spacing:0.017px;">Belgium</div></div>
<div class="abs" style="left:41px;top:459px;width:94px;height:22px;overflow:hidden"><div class="t" style="left:3.50px;top:0;font-size:20px;line-height:22px;color:#000;letter-spacing:-0.251px;">Bulgaria</div></div>
<div class="abs" style="left:41px;top:488px;width:94px;height:22px;overflow:hidden"><div class="t" style="left:3.00px;top:0;font-size:20px;line-height:22px;color:#000;letter-spacing:-0.567px;">Canada</div></div>
<div class="abs" style="left:41px;top:517px;width:94px;height:22px;overflow:hidden"><div class="t" style="left:2.70px;top:0;font-size:20px;line-height:22px;color:#000;letter-spacing:-0.088px;">Chile</div></div>
<div class="abs" style="left:41px;top:546px;width:94px;height:22px;overflow:hidden"><div class="t" style="left:2.70px;top:0;font-size:20px;line-height:22px;color:#000;letter-spacing:0.058px;">Croatia</div></div>
<div class="abs" style="left:41px;top:575px;width:94px;height:22px;overflow:hidden"><div class="t" style="left:2.70px;top:0;font-size:20px;line-height:22px;color:#000;letter-spacing:-0.090px;">Cyprus</div></div>
<div class="abs" style="left:41px;top:604px;width:94px;height:22px;overflow:hidden"><div class="t" style="left:2.70px;top:0;font-size:20px;line-height:22px;color:#000;letter-spacing:-0.939px;">Czech Republic</div></div>
<div class="abs" style="left:41px;top:633px;width:94px;height:22px;overflow:hidden"><div class="t" style="left:3.50px;top:0;font-size:20px;line-height:22px;color:#000;letter-spacing:0.228px;">Denmark</div></div>
<div class="abs" style="left:41px;top:662px;width:94px;height:22px;overflow:hidden"><div class="t" style="left:3.50px;top:0;font-size:20px;line-height:22px;color:#000;letter-spacing:-0.314px;">Estonia</div></div>
<div class="abs" style="left:41px;top:691px;width:94px;height:22px;overflow:hidden"><div class="t" style="left:3.50px;top:0;font-size:20px;line-height:22px;color:#000;letter-spacing:0.205px;">Finland</div></div>
<div class="abs" style="left:41px;top:720px;width:94px;height:22px;overflow:hidden"><div class="t" style="left:3.50px;top:0;font-size:20px;line-height:22px;color:#000;letter-spacing:-0.365px;">France</div></div>
<div class="abs" style="left:41px;top:749px;width:94px;height:22px;overflow:hidden"><div class="t" style="left:2.70px;top:0;font-size:20px;line-height:22px;color:#000;letter-spacing:0.342px;">Germany</div></div>
<div class="abs" style="left:41px;top:778px;width:94px;height:22px;overflow:hidden"><div class="t" style="left:2.70px;top:0;font-size:20px;line-height:22px;color:#000;letter-spacing:-0.353px;">Greece</div></div>
<div class="abs" style="left:41px;top:807px;width:94px;height:22px;overflow:hidden"><div class="t" style="left:3.30px;top:0;font-size:20px;line-height:22px;color:#000;letter-spacing:0.184px;">Hungary</div></div>
<div class="abs" style="left:41px;top:836px;width:94px;height:22px;overflow:hidden"><div class="t" style="left:3.30px;top:0;font-size:20px;line-height:22px;color:#000;letter-spacing:0.222px;">Iceland</div></div>
<div class="abs" style="left:137px;top:343px;width:95px;height:22px;overflow:hidden"><div class="t" style="left:2.90px;top:0;font-size:20px;line-height:22px;color:#000;letter-spacing:0.010px;">IncomeCentral</div></div>
<div class="abs" style="left:233px;top:343px;width:95px;height:22px;overflow:hidden"><div class="t" style="left:3.00px;top:0;font-size:20px;line-height:22px;color:#000;letter-spacing:0.199px;">IncomeLocal</div></div>
<div class="abs" style="left:329px;top:343px;width:95px;height:22px;overflow:hidden"><div class="t" style="left:3.10px;top:0;font-size:20px;line-height:22px;color:#000;letter-spacing:-0.232px;">IncomeSubcentral</div></div>
<div class="abs" style="left:425px;top:343px;width:95px;height:22px;overflow:hidden"><div class="t" style="left:3.40px;top:0;font-size:20px;line-height:22px;color:#000;letter-spacing:-0.145px;">EmployeeSSC</div></div>
<div class="abs" style="left:521px;top:343px;width:95px;height:22px;overflow:hidden"><div class="t" style="left:2.80px;top:0;font-size:20px;line-height:22px;color:#000;letter-spacing:-0.073px;">EmployeeSSC2</div></div>
<div class="abs" style="left:617px;top:343px;width:95px;height:22px;overflow:hidden"><div class="t" style="left:2.90px;top:0;font-size:20px;line-height:22px;color:#000;letter-spacing:-0.117px;">Payroll taxes</div></div>
<div class="abs" style="left:713px;top:343px;width:95px;height:22px;overflow:hidden"><div class="t" style="left:2.50px;top:0;font-size:20px;line-height:22px;color:#000;letter-spacing:0.186px;">Consumption</div></div>
<div class="t" style="left:812.80px;top:343px;font-size:20px;line-height:22px;color:#000;letter-spacing:0.214px;">Effective marginal tax rate</div>
<div class="cell num" style="left:137px;top:368px;width:95px">45</div>
<div class="cell num" style="left:521px;top:368px;width:95px">2</div>
<div class="cell num" style="left:617px;top:368px;width:95px">5.52</div>
<div class="cell num" style="left:713px;top:368px;width:95px">7.6</div>
<div class="cell num" style="left:809px;top:368px;width:95px">53.6</div>
<div class="cell num" style="left:137px;top:397px;width:95px">55</div>
<div class="cell num" style="left:617px;top:397px;width:95px">6.9</div>
<div class="cell num" style="left:713px;top:397px;width:95px">16.2</div>
<div class="cell num" style="left:809px;top:397px;width:95px">64.7</div>
<div class="cell num" style="left:137px;top:426px;width:95px">50</div>
<div class="cell num" style="left:233px;top:426px;width:95px">3.5</div>
<div class="cell num" style="left:425px;top:426px;width:95px">13.07</div>
<div class="cell num" style="left:617px;top:426px;width:95px">27.13</div>
<div class="cell num" style="left:713px;top:426px;width:95px">14.6</div>
<div class="cell num" style="left:809px;top:426px;width:95px">72.9</div>
<div class="cell num" style="left:137px;top:455px;width:95px">10</div>
<div class="cell num" style="left:713px;top:455px;width:95px">20.9</div>
<div class="cell num" style="left:809px;top:455px;width:95px">28.8</div>
<div class="cell num" style="left:137px;top:484px;width:95px">33</div>
<div class="cell num" style="left:233px;top:484px;width:95px">17.46</div>
<div class="cell num" style="left:713px;top:484px;width:95px">8.9</div>
<div class="cell num" style="left:809px;top:484px;width:95px">54.9</div>
<div class="cell num" style="left:137px;top:513px;width:95px">35.5</div>
<div class="cell num" style="left:617px;top:513px;width:95px">0.02</div>
<div class="cell num" style="left:713px;top:513px;width:95px">14.5</div>
<div class="cell num" style="left:809px;top:513px;width:95px">44.9</div>
<div class="cell num" style="left:137px;top:542px;width:95px">36</div>
<div class="cell num" style="left:329px;top:542px;width:95px">6.48</div>
<div class="cell num" style="left:617px;top:542px;width:95px">16.5</div>
<div class="cell num" style="left:713px;top:542px;width:95px">27</div>
<div class="cell num" style="left:809px;top:542px;width:95px">64</div>
<div class="cell num" style="left:137px;top:571px;width:95px">35</div>
<div class="cell num" style="left:713px;top:571px;width:95px">17.9</div>
<div class="cell num" style="left:809px;top:571px;width:95px">46.6</div>
<div class="cell num" style="left:137px;top:600px;width:95px">15</div>
<div class="cell num" style="left:329px;top:600px;width:95px">7</div>
<div class="cell num" style="left:521px;top:600px;width:95px">13.5</div>
<div class="cell num" style="left:713px;top:600px;width:95px">19</div>
<div class="cell num" style="left:809px;top:600px;width:95px">47.8</div>
<div class="cell num" style="left:137px;top:629px;width:95px">52.05</div>
<div class="cell num" style="left:425px;top:629px;width:95px">8</div>
<div class="cell num" style="left:713px;top:629px;width:95px">23.4</div>
<div class="cell num" style="left:809px;top:629px;width:95px">66.2</div>
<div class="cell num" style="left:137px;top:658px;width:95px">20</div>
<div class="cell num" style="left:425px;top:658px;width:95px">1.6</div>
<div class="cell num" style="left:617px;top:658px;width:95px">33.8</div>
<div class="cell num" style="left:713px;top:658px;width:95px">22.6</div>
<div class="cell num" style="left:809px;top:658px;width:95px">54.5</div>
<div class="cell num" style="left:137px;top:687px;width:95px">31.25</div>
<div class="cell num" style="left:233px;top:687px;width:95px">19.88</div>
<div class="cell num" style="left:425px;top:687px;width:95px">8.25</div>
<div class="cell num" style="left:617px;top:687px;width:95px">20.32</div>
<div class="cell num" style="left:713px;top:687px;width:95px">19.7</div>
<div class="cell num" style="left:809px;top:687px;width:95px">70.1</div>
<div class="cell num" style="left:137px;top:716px;width:95px">45</div>
<div class="cell num" style="left:329px;top:716px;width:95px">4</div>
<div class="cell num" style="left:425px;top:716px;width:95px">7.2</div>
<div class="cell num" style="left:521px;top:716px;width:95px">2.9</div>
<div class="cell num" style="left:617px;top:716px;width:95px">22.67</div>
<div class="cell num" style="left:713px;top:716px;width:95px">15.2</div>
<div class="cell num" style="left:809px;top:716px;width:95px">69.3</div>
<div class="cell num" style="left:137px;top:745px;width:95px">45</div>
<div class="cell num" style="left:329px;top:745px;width:95px">2.475</div>
<div class="cell num" style="left:713px;top:745px;width:95px">13.8</div>
<div class="cell num" style="left:809px;top:745px;width:95px">54.7</div>
<div class="cell num" style="left:137px;top:774px;width:95px">45</div>
<div class="cell num" style="left:329px;top:774px;width:95px">10</div>
<div class="cell num" style="left:713px;top:774px;width:95px">16</div>
<div class="cell num" style="left:809px;top:774px;width:95px">62.2</div>
<div class="cell num" style="left:137px;top:803px;width:95px">15</div>
<div class="cell num" style="left:521px;top:803px;width:95px">18.5</div>
<div class="cell num" style="left:617px;top:803px;width:95px">17.5</div>
<div class="cell num" style="left:713px;top:803px;width:95px">24.3</div>
<div class="cell num" style="left:809px;top:803px;width:95px">57.2</div>
<div class="cell num" style="left:137px;top:832px;width:95px">31.8</div>
<div class="cell num" style="left:233px;top:832px;width:95px">14.44</div>
<div class="cell num" style="left:617px;top:832px;width:95px">6.85</div>
<div class="cell num" style="left:713px;top:832px;width:95px">18.6</div>
<div class="cell num" style="left:809px;top:832px;width:95px">59</div>
<div class="abs" style="left:39px;top:337px;width:2px;height:520px;background:#0f6a38"></div>
<div class="abs" style="left:136px;top:344px;width:2px;height:513px;background:#0f6a38"></div>
<div class="abs" style="left:39px;top:337px;width:99px;height:2px;background:#0f6a38"></div>
<div class="abs" style="left:133px;top:337px;width:6px;height:6px;background:#217346;border:1px solid #0f6a38"></div>
<div class="abs" style="left:1158px;top:338px;width:1px;height:519px;background:#a0a0a0"></div>
<div class="abs" style="left:1159px;top:310px;width:27px;height:548px;background:#e6e6e6"></div>
<div class="abs" style="left:2px;top:856px;width:1184px;height:34px;background:#e6e6e6"></div>
<div class="abs" style="left:1px;top:856px;width:1158px;height:1px;background:#a6a6a6"></div>
<div class="abs" style="left:1161px;top:311px;width:24px;height:25px;background:#fff;border:1px solid #b4b4b4"></div>
<div class="abs" style="left:1161px;top:336px;width:24px;height:497px;background:#dadada"></div>
<div class="abs" style="left:1161px;top:336px;width:24px;height:201px;background:#fff;border:1px solid #b4b4b4"></div>
<div class="abs" style="left:1161px;top:833px;width:24px;height:25px;background:#fff;border:1px solid #b4b4b4"></div>
<svg style="left:1167.500px;top:320px" width="11" height="6" viewBox="0 0 11 6"><path d="M0 6h11l-5.500-6z" fill="#777"/></svg>
<svg style="left:1167.500px;top:843px" width="11" height="6" viewBox="0 0 11 6"><path d="M0 0h11l-5.500 6z" fill="#777"/></svg>
<div class="abs" style="left:730px;top:860px;width:25px;height:25px;background:#fff;border:1px solid #b4b4b4"></div>
<div class="abs" style="left:754px;top:860px;width:381px;height:25px;background:#dadada"></div>
<div class="abs" style="left:754px;top:860px;width:346px;height:25px;background:#fff;border:1px solid #b4b4b4"></div>
<div class="abs" style="left:1135px;top:860px;width:25px;height:25px;background:#fff;border:1px solid #b4b4b4"></div>
<svg style="left:739px;top:867px" width="6" height="11" viewBox="0 0 6 11"><path d="M6 0v11l-6-5.500z" fill="#777"/></svg>
<svg style="left:1145px;top:867px" width="6" height="11" viewBox="0 0 6 11"><path d="M0 0v11l6-5.500z" fill="#777"/></svg>
<div class="abs" style="left:710px;top:865px;width:3px;height:3px;background:#c0c0c0"></div>
<div class="abs" style="left:710px;top:871px;width:3px;height:3px;background:#c0c0c0"></div>
<div class="abs" style="left:710px;top:877px;width:3px;height:3px;background:#c0c0c0"></div>
<svg style="left:30px;top:867px" width="7" height="11" viewBox="0 0 7 11"><path d="M7 0v11l-7-5.500z" fill="#c4c4c4"/></svg>
<svg style="left:65px;top:867px" width="7" height="11" viewBox="0 0 7 11"><path d="M0 0v11l7-5.500z" fill="#c4c4c4"/></svg>
<div class="abs" style="left:119px;top:857px;width:111px;height:30px;background:#fff;border-left:1px solid #c6c6c6;border-right:1px solid #c6c6c6;border-bottom:2px solid #217346"></div>
<div class="t" style="left:133.30px;top:861px;font-size:19.2px;line-height:22px;color:#217346;font-weight:bold;letter-spacing:0.039px;">TaxRates</div>
<div class="t" style="left:249.40px;top:861px;font-size:19.2px;line-height:22px;color:#444;letter-spacing:-0.285px;">TaxRates - Source</div>
<div class="abs" style="left:422px;top:861px;width:1px;height:24px;background:#ababab"></div>
<svg style="left:461.500px;top:860.500px" width="23" height="23" viewBox="0 0 23 23" fill="none" stroke="#5e5e5e" stroke-width="1.400"><circle cx="11.500" cy="11.500" r="10.500"/><path d="M6.500 11.500h10M11.500 6.500v10"/></svg>
<div class="abs" style="left:2px;top:890px;width:1184px;height:1px;background:#c6c6c6"></div>
<div class="abs" style="left:2px;top:891px;width:1184px;height:31px;background:#f3f2f1"></div>
<div class="t" style="left:633.00px;top:900px;font-size:14.8px;line-height:17px;color:#444;letter-spacing:0.170px;">Count: 42</div>
<div class="abs" style="left:727px;top:891px;width:60px;height:32px;background:#c8c8c8"></div>
<svg style="left:747px;top:897px" width="19" height="19" viewBox="0 0 19 19" fill="none" stroke="#333" stroke-width="1.400"><rect x="0.700" y="0.700" width="17.600" height="17.600"/><path d="M0.700 6.500h17.600M0.700 12.500h17.600M6.500 0.700v17.600M12.500 0.700v17.600"/></svg>
<svg style="left:806px;top:897px" width="22" height="19" viewBox="0 0 22 19" fill="none" stroke="#444" stroke-width="1.400"><rect x="0.700" y="0.700" width="20.600" height="17.600"/><rect x="5.200" y="4.300" width="11.200" height="11"/><path d="M7.500 7.300h6.600M7.500 9.800h6.600M7.500 12.300h6.600" stroke-width="1.100"/></svg>
<svg style="left:866.500px;top:897px" width="22" height="19" viewBox="0 0 22 19" fill="none" stroke="#444" stroke-width="1.400"><rect x="0.700" y="0.700" width="20.600" height="17.600"/><path d="M0.700 11h13.100V0.700M7.600 0.700V7"/></svg>
<div class="abs" style="left:915px;top:906px;width:11px;height:1px;background:#444"></div>
<div class="abs" style="left:935px;top:906.500px;width:148px;height:1px;background:#8a8a8a"></div>
<div class="abs" style="left:1005px;top:899px;width:8px;height:17px;background:#5a5a5a"></div>
<div class="abs" style="left:1091px;top:906px;width:12px;height:1px;background:#444"></div>
<div class="abs" style="left:1096.500px;top:900.500px;width:1px;height:12px;background:#444"></div>
<div class="t" style="left:1121.30px;top:900px;font-size:14.8px;line-height:17px;color:#444;letter-spacing:0.571px;">100%</div>
<div class="abs" style="left:1px;top:922px;width:1185px;height:1px;background:#fff"></div>
<div class="abs" style="left:0;top:923px;width:1186px;height:2px;background:#217346"></div>
<div class="abs" style="left:0;top:925px;width:1186px;height:2px;background:#d6d6d6;overflow:hidden"><div class="t" style="left:-14px;top:-1px;font-size:15px;line-height:16px;color:#1a1a5a">em selected&nbsp;&nbsp;11.7 KB</div></div>
</div></body></html>
